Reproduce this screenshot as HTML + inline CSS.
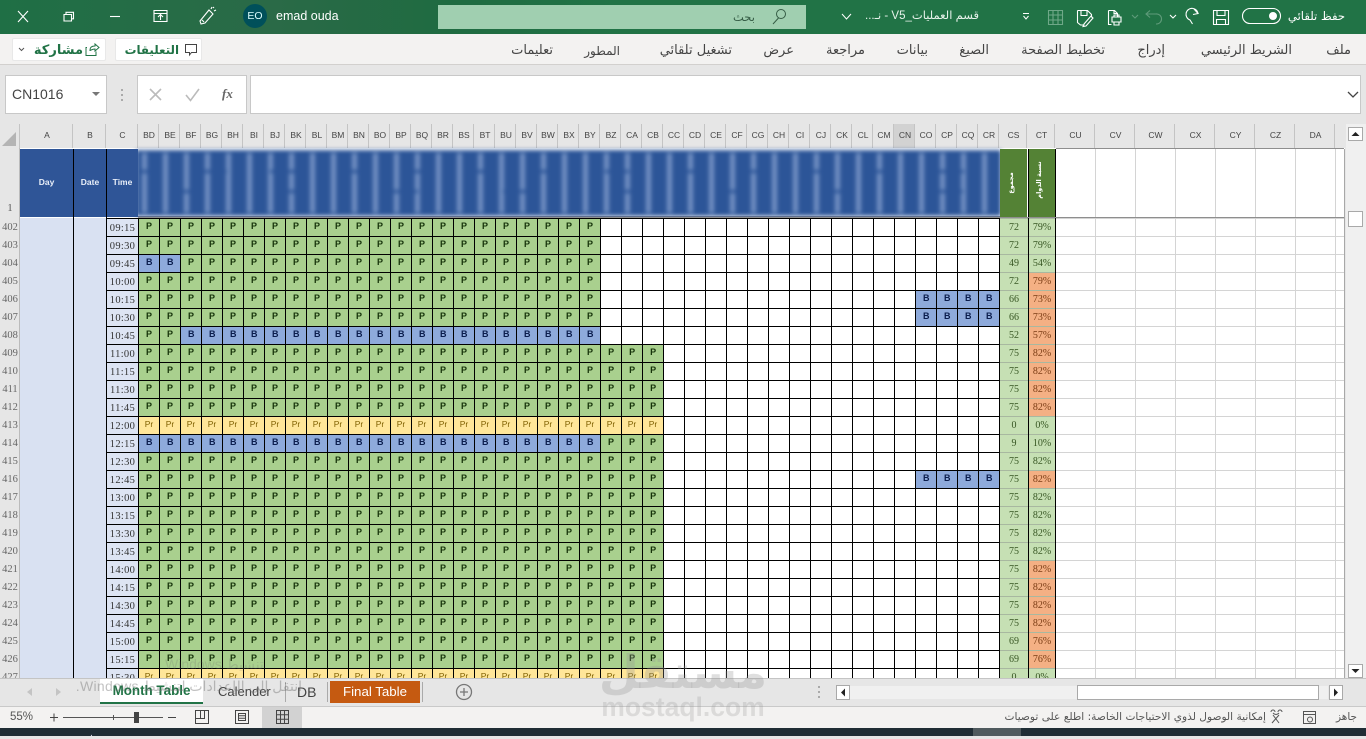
<!DOCTYPE html>
<html lang="ar"><head><meta charset="utf-8"><title>Excel</title>
<style>
*{box-sizing:border-box}
html,body{margin:0;padding:0;width:1366px;height:736px;overflow:hidden;background:#e6e6e6;font-family:"Liberation Sans","DejaVu Sans",sans-serif}
.a{position:absolute;white-space:nowrap}
svg{position:absolute;overflow:visible}
#title{left:0;top:0;width:1366px;height:34px;background:linear-gradient(90deg,#1f6f45,#2a6a47 20%,#1f6b41 33%,#217346 45%,#217346)}
#ribbon{left:0;top:34px;width:1366px;height:31px;background:#f3f2f1;border-bottom:1px solid #d2d0ce}
.tab{top:43px;font:13px "DejaVu Sans",sans-serif;color:#444;direction:rtl}
.btn{background:#fff;border:1px solid #e8e8e8;border-radius:2px}
#fb{left:0;top:65px;width:1366px;height:59px;background:#e6e6e6}
.box{background:#fff;border:1px solid #c8c8c8}
#sheet{left:20px;top:148px;width:1325px;height:530px;background:#fff}
#ch{left:0;top:124px;width:1346px;height:24px;background:#e6e6e6;display:flex;font-size:8.5px;color:#444}
#ch span{display:block;text-align:center;line-height:23px;border-right:1px solid #c4c4c4;height:24px;padding-left:2px}
#ch .n{width:21px}#ch .m{width:40px}
#ro{left:0;top:148px;width:20px;height:530px;background:#e6e6e6;border-right:1px solid #bbb}
#nums{left:0;top:219px;width:20px;height:459px;overflow:hidden;font:10.5px/18px "Liberation Serif",serif;color:#666;text-align:center}
.lb{background:#d9e1f2;top:218px;height:460px}
.hd{background:#2f5597;color:#e8eef8;font:bold 8.5px/66px "Liberation Sans",sans-serif;text-align:center;top:149px;height:68px}
#times{left:107px;top:218px;width:31px;height:460px;overflow:hidden;font:10.5px/18px "Liberation Serif",serif;color:#333;text-align:center;letter-spacing:.3px}
#times div{height:18px;line-height:19px;border-top:1px solid #000;background:#dde4f3}
#grid{left:138px;top:218px;width:861px;height:460px;overflow:hidden;background:#fff}
.r{display:flex;height:18px}
.r p{margin:0;height:18px;font:bold 9px/16px "Liberation Sans",sans-serif;letter-spacing:15px;padding-left:8px;overflow:hidden;white-space:nowrap;flex:none}
.g{background:#a9d08e;color:#16330a}
.r p.u{background:#8eaadb;color:#0b1d4d;letter-spacing:14.5px;padding-left:8px}
.y{background:#ffe699;color:#7f6000;width:21px;height:18px;font:8.5px/16px "Liberation Sans",sans-serif;text-align:center;flex:none;padding-left:1px}
#lines{left:138px;top:218px;width:862px;height:460px;background-image:linear-gradient(90deg,#000 1px,transparent 1px),linear-gradient(#000 1px,transparent 1px);background-size:21px 18px}
#cs,#ct{top:218px;height:460px;overflow:hidden;font:10px/18px "Liberation Serif",serif;color:#375623;text-align:center}
#cs{left:1000px;width:28px}#ct{left:1028px;width:28px;border-left:1px solid #000;border-right:1px solid #000}
#cs div,#ct div{height:18px;background:#c6e0b4;border-top:1px solid #a8b8a0;line-height:18px}
#ct .o{background:#f4b084;color:#7a3c14}
#gl{left:1056px;top:149px;width:288px;height:529px;background-image:linear-gradient(90deg,transparent 39px,#d4d4d4 39px);background-size:40px 100%}
#gh{left:1056px;top:218px;width:288px;height:460px;background-image:linear-gradient(#d4d4d4 1px,transparent 1px);background-size:100% 18px}
#blur{left:136px;top:150px;width:865px;height:66px;background:#2c5598;overflow:visible;filter:blur(2.2px)}
#blur div{position:absolute;left:6px;top:3px;width:858px;height:60px;background:repeating-linear-gradient(90deg,#7592c4 0 5px,transparent 5px 21px)}
#blur em{position:absolute;left:0;width:865px;height:3px}
.gt{background:#548235;top:149px;height:68px;color:#fff}
.gt span{position:absolute;font:bold 6.5px "DejaVu Sans",sans-serif;transform:rotate(-90deg);white-space:nowrap;direction:rtl}
#tabs{left:0;top:678px;width:1366px;height:29px;background:#e6e6e6;border-bottom:1px solid #c9c9c9;border-top:1px solid #c4c4c4}
#status{left:0;top:707px;width:1366px;height:21px;background:#f3f2f1}
#task{left:0;top:728px;width:1366px;height:8px;background:#1f2d35}
.sb{background:#fff;border:1px solid #a9a9a9}
</style></head><body>

<div id="title" class="a"></div>
<svg style="left:0;top:0" width="440" height="34" fill="none" stroke="#fff" stroke-width="1.1">
<path d="M18 11 L28 22 M28 11 L18 22"/>
<path d="M64 14.500h7.500v6.500h-7.500z M66 14.500v-2.200h7.500v6.500h-2"/>
<path d="M110 16.500h10"/>
<path d="M154 10.500h13v11h-13z M154 13.500h13 M160.500 20v-5 M158 17l2.500-2.500 2.500 2.500"/>
<path d="M200 21l9-11 4 4-8 9-4 1z M202 20l2 2 M211 9l1-2 M214 11l2-1 M213 8l1-1"/>
</svg>
<div class="a" style="left:243px;top:4px;width:24px;height:24px;border-radius:50%;background:#00505a;color:#dff;font:10.5px/24px 'Liberation Sans',sans-serif;text-align:center">EO</div>
<div class="a" style="left:276px;top:8px;color:#fff;font:12.5px/17px 'Liberation Sans',sans-serif">emad ouda</div>
<div class="a" style="left:438px;top:5px;width:368px;height:24px;background:#a0cfb0"></div>
<svg style="left:770px;top:8px" width="18" height="18" fill="none" stroke="#355c45" stroke-width="1"><circle cx="11" cy="6" r="4.500"/><path d="M8.500 10 L3 16"/></svg>
<div class="a" style="left:733px;top:9px;color:#355c45;font:11.5px/16px 'DejaVu Sans',sans-serif;direction:rtl">بحث</div>
<div class="a" style="left:857px;top:8px;width:122px;color:#e6f2ea;font:11.5px/17px 'Liberation Sans','DejaVu Sans',sans-serif;direction:rtl;text-align:right">قسم العمليات_V5 - نـ...</div>
<svg style="left:840px;top:12px" width="14" height="10" fill="none" stroke="#fff"><path d="M2 2l4.500 5 4.500-5"/></svg>
<svg style="left:1020px;top:0" width="346" height="34" fill="none" stroke="#fff" stroke-width="1.1">
<path d="M3 13.500h6 M3.500 16l2.500 3 2.500-3" stroke-width="1"/>
<g stroke="#6fa888"><path d="M28.500 10.500h14v14h-14z M28.500 15h14 M28.500 20h14 M33 10.500v14 M38 10.500v14"/></g>
<path d="M57.500 10.500h10l4 4v3 M57.500 10.500v12l3 2.500h4 M61 10.500v5h6v-5 M64 24l7-8 2 2-7 8-3 .5z"/>
<path d="M88.500 10.500h6l3 3v3 M88.500 10.500v14h3 M94 10.500v3h3 M92 17h9v5h-9z M94 17v-2h5v2 M94 22v3h5v-3"/>
<path d="M112 15l3 3 3-3" stroke="#5f9b7a"/>
<path d="M128 14h9a5 5 0 0 1 1 10h-1 M131 10.500l-4 3.500 4 3.500" stroke="#5f9b7a" transform="translate(-1 0)"/>
<path d="M150 15l3 3 3-3"/>
<path d="M178 14a6 6 0 1 0-8 6l2.500 4 M174 9l4 4.500-5 1"/>
<path d="M193.500 10.500h15v14h-15z M197 10.500v5h8v-5 M196.500 24.500v-5h9v5"/>
<rect x="222.500" y="8.500" width="38" height="15" rx="7.500"/>
</svg>
<div class="a" style="left:1269px;top:12px;width:8px;height:8px;border-radius:50%;background:#fff"></div>
<div class="a" style="left:1285px;top:8px;width:60px;color:#fff;font:11.6px/16px 'DejaVu Sans',sans-serif;direction:rtl;text-align:right">حفظ تلقائي</div>

<div id="ribbon" class="a"></div>
<div class="a tab" style="right:15px">ملف</div>
<div class="a tab" style="right:74px">الشريط الرئيسي</div>
<div class="a tab" style="right:201px">إدراج</div>
<div class="a tab" style="right:261px">تخطيط الصفحة</div>
<div class="a tab" style="right:377px">الصيغ</div>
<div class="a tab" style="right:438px">بيانات</div>
<div class="a tab" style="right:501px">مراجعة</div>
<div class="a tab" style="right:572px">عرض</div>
<div class="a tab" style="right:634px">تشغيل تلقائي</div>
<div class="a tab" style="right:746px;font-size:12px;top:44px">المطور</div>
<div class="a tab" style="right:813px">تعليمات</div>
<div class="a btn" style="left:12px;top:38px;width:94px;height:23px"></div>
<div class="a btn" style="left:115px;top:38px;width:87px;height:23px"></div>
<svg style="left:12px;top:38px" width="192" height="23" fill="none" stroke="#217346" stroke-width="1">
<path d="M7 10l2.500 2.500 2.500-2.500" stroke="#555"/>
<path d="M75 9.500h-1v8h10v-4 M78 13v-1c0-3 2-4 5-4V6l4 3.500-4 3.500v-2c-2 0-3 .5-5 1.500z"/>
<path d="M173.500 6.500h11v8h-5l-2 2.500v-2.500h-4z" stroke="#444"/>
</svg>
<div class="a" style="left:30px;top:42px;width:53px;color:#217346;font:bold 13px/17px 'DejaVu Sans',sans-serif;direction:rtl;text-align:right">مشاركة</div>
<div class="a" style="left:122px;top:42px;width:57px;color:#217346;font:bold 11.8px/17px 'DejaVu Sans',sans-serif;direction:rtl;text-align:right">التعليقات</div>

<div id="fb" class="a"></div>
<div class="a box" style="left:5px;top:75px;width:102px;height:39px"></div>
<div class="a" style="left:12px;top:86px;font:14px/17px 'Liberation Sans',sans-serif;color:#444">CN1016</div>
<svg style="left:88px;top:90px" width="16" height="10"><path d="M4 2h8l-4 4z" fill="#777"/></svg>
<svg style="left:118px;top:88px" width="8" height="18" fill="#aaa"><rect x="3" y="1" width="2" height="2"/><rect x="3" y="6" width="2" height="2"/><rect x="3" y="11" width="2" height="2"/></svg>
<div class="a box" style="left:137px;top:75px;width:110px;height:39px"></div>
<svg style="left:137px;top:75px" width="110" height="39" fill="none" stroke="#bbb" stroke-width="1.600"><path d="M13 14l11 11 M24 14L13 25"/><path d="M49 20l4.500 5.500L62 14" /></svg>
<div class="a" style="left:222px;top:85px;font:italic bold 13px/18px 'Liberation Serif',serif;color:#666">fx</div>
<div class="a box" style="left:250px;top:75px;width:1111px;height:39px"></div>
<svg style="left:1346px;top:90px" width="14" height="10" fill="none" stroke="#444" stroke-width="1.300"><path d="M2 2l5 5 5-5"/></svg>

<div id="sheet" class="a"></div>
<div id="ch" class="a">
<span style="width:20px;background:#e6e6e6"></span><span style="width:53px">A</span><span style="width:33px">B</span><span style="width:32px">C</span>
<span class="n">BD</span><span class="n">BE</span><span class="n">BF</span><span class="n">BG</span><span class="n">BH</span><span class="n">BI</span><span class="n">BJ</span><span class="n">BK</span><span class="n">BL</span><span class="n">BM</span><span class="n">BN</span><span class="n">BO</span><span class="n">BP</span><span class="n">BQ</span><span class="n">BR</span><span class="n">BS</span><span class="n">BT</span><span class="n">BU</span><span class="n">BV</span><span class="n">BW</span><span class="n">BX</span><span class="n">BY</span><span class="n">BZ</span><span class="n">CA</span><span class="n">CB</span><span class="n">CC</span><span class="n">CD</span><span class="n">CE</span><span class="n">CF</span><span class="n">CG</span><span class="n">CH</span><span class="n">CI</span><span class="n">CJ</span><span class="n">CK</span><span class="n">CL</span><span class="n">CM</span><span class="n" style="background:#d2d2d2">CN</span><span class="n">CO</span><span class="n">CP</span><span class="n">CQ</span><span class="n">CR</span>
<span style="width:28px">CS</span><span style="width:28px">CT</span>
<span class="m">CU</span><span class="m">CV</span><span class="m">CW</span><span class="m">CX</span><span class="m">CY</span><span class="m">CZ</span><span class="m">DA</span>
</div>
<svg style="left:0;top:124px" width="20" height="24"><path d="M2 22 L16 8 V22z" fill="#b4b4b4"/></svg>
<div id="ro" class="a"></div>
<div class="a" style="left:0;top:202px;width:20px;text-align:center;font:10.5px/14px 'Liberation Serif',serif;color:#555">1</div>
<div id="nums" class="a">402<br>403<br>404<br>405<br>406<br>407<br>408<br>409<br>410<br>411<br>412<br>413<br>414<br>415<br>416<br>417<br>418<br>419<br>420<br>421<br>422<br>423<br>424<br>425<br>426<br>427</div>

<div id="gl" class="a"></div>
<div id="gh" class="a"></div>
<div class="a" style="left:1344px;top:149px;width:1px;height:529px;background:#a8a8a8"></div>

<div id="blur" class="a"><div></div><em style="top:20px;background:repeating-linear-gradient(90deg,#2c5598 0 24px,transparent 24px 67px)"></em><em style="top:40px;background:repeating-linear-gradient(90deg,transparent 0 40px,#2c5598 40px 64px,transparent 64px 109px)"></em></div>
<div class="a" style="left:138px;top:216px;width:862px;height:2px;background:#5f6f8f"></div>

<div class="a lb" style="left:20px;width:53px"></div>
<div class="a lb" style="left:74px;width:32px"></div>
<div class="a" style="left:73px;top:149px;width:1px;height:529px;background:#000"></div>
<div class="a" style="left:106px;top:149px;width:1px;height:529px;background:#000"></div>
<div class="a hd" style="left:20px;width:53px">Day</div>
<div class="a hd" style="left:74px;width:32px">Date</div>
<div class="a hd" style="left:107px;width:31px">Time</div>
<div id="times" class="a"><div>09:15</div><div>09:30</div><div>09:45</div><div>10:00</div><div>10:15</div><div>10:30</div><div>10:45</div><div>11:00</div><div>11:15</div><div>11:30</div><div>11:45</div><div>12:00</div><div>12:15</div><div>12:30</div><div>12:45</div><div>13:00</div><div>13:15</div><div>13:30</div><div>13:45</div><div>14:00</div><div>14:15</div><div>14:30</div><div>14:45</div><div>15:00</div><div>15:15</div><div>15:30</div></div>

<div id="grid" class="a">
<div class="r"><p class="g" style="width:462px">PPPPPPPPPPPPPPPPPPPPPP</p></div>
<div class="r"><p class="g" style="width:462px">PPPPPPPPPPPPPPPPPPPPPP</p></div>
<div class="r"><p class="u" style="width:42px">BB</p><p class="g" style="width:420px">PPPPPPPPPPPPPPPPPPPP</p></div>
<div class="r"><p class="g" style="width:462px">PPPPPPPPPPPPPPPPPPPPPP</p></div>
<div class="r"><p class="g" style="width:462px">PPPPPPPPPPPPPPPPPPPPPP</p><p class="u" style="width:84px;margin-left:315px">BBBB</p></div>
<div class="r"><p class="g" style="width:462px">PPPPPPPPPPPPPPPPPPPPPP</p><p class="u" style="width:84px;margin-left:315px">BBBB</p></div>
<div class="r"><p class="g" style="width:42px">PP</p><p class="u" style="width:420px">BBBBBBBBBBBBBBBBBBBB</p></div>
<div class="r"><p class="g" style="width:525px">PPPPPPPPPPPPPPPPPPPPPPPPP</p></div>
<div class="r"><p class="g" style="width:525px">PPPPPPPPPPPPPPPPPPPPPPPPP</p></div>
<div class="r"><p class="g" style="width:525px">PPPPPPPPPPPPPPPPPPPPPPPPP</p></div>
<div class="r"><p class="g" style="width:525px">PPPPPPPPPPPPPPPPPPPPPPPPP</p></div>
<div class="r"><div class="y">Pr</div><div class="y">Pr</div><div class="y">Pr</div><div class="y">Pr</div><div class="y">Pr</div><div class="y">Pr</div><div class="y">Pr</div><div class="y">Pr</div><div class="y">Pr</div><div class="y">Pr</div><div class="y">Pr</div><div class="y">Pr</div><div class="y">Pr</div><div class="y">Pr</div><div class="y">Pr</div><div class="y">Pr</div><div class="y">Pr</div><div class="y">Pr</div><div class="y">Pr</div><div class="y">Pr</div><div class="y">Pr</div><div class="y">Pr</div><div class="y">Pr</div><div class="y">Pr</div><div class="y">Pr</div></div>
<div class="r"><p class="u" style="width:462px">BBBBBBBBBBBBBBBBBBBBBB</p><p class="g" style="width:63px">PPP</p></div>
<div class="r"><p class="g" style="width:525px">PPPPPPPPPPPPPPPPPPPPPPPPP</p></div>
<div class="r"><p class="g" style="width:525px">PPPPPPPPPPPPPPPPPPPPPPPPP</p><p class="u" style="width:84px;margin-left:252px">BBBB</p></div>
<div class="r"><p class="g" style="width:525px">PPPPPPPPPPPPPPPPPPPPPPPPP</p></div>
<div class="r"><p class="g" style="width:525px">PPPPPPPPPPPPPPPPPPPPPPPPP</p></div>
<div class="r"><p class="g" style="width:525px">PPPPPPPPPPPPPPPPPPPPPPPPP</p></div>
<div class="r"><p class="g" style="width:525px">PPPPPPPPPPPPPPPPPPPPPPPPP</p></div>
<div class="r"><p class="g" style="width:525px">PPPPPPPPPPPPPPPPPPPPPPPPP</p></div>
<div class="r"><p class="g" style="width:525px">PPPPPPPPPPPPPPPPPPPPPPPPP</p></div>
<div class="r"><p class="g" style="width:525px">PPPPPPPPPPPPPPPPPPPPPPPPP</p></div>
<div class="r"><p class="g" style="width:525px">PPPPPPPPPPPPPPPPPPPPPPPPP</p></div>
<div class="r"><p class="g" style="width:525px">PPPPPPPPPPPPPPPPPPPPPPPPP</p></div>
<div class="r"><p class="g" style="width:525px">PPPPPPPPPPPPPPPPPPPPPPPPP</p></div>
<div class="r"><div class="y">Pr</div><div class="y">Pr</div><div class="y">Pr</div><div class="y">Pr</div><div class="y">Pr</div><div class="y">Pr</div><div class="y">Pr</div><div class="y">Pr</div><div class="y">Pr</div><div class="y">Pr</div><div class="y">Pr</div><div class="y">Pr</div><div class="y">Pr</div><div class="y">Pr</div><div class="y">Pr</div><div class="y">Pr</div><div class="y">Pr</div><div class="y">Pr</div><div class="y">Pr</div><div class="y">Pr</div><div class="y">Pr</div><div class="y">Pr</div><div class="y">Pr</div><div class="y">Pr</div><div class="y">Pr</div></div>
</div>
<div id="lines" class="a"></div>

<div class="a gt" style="left:1000px;width:27px"><span style="left:-5px;top:30px;width:32px;text-align:center">مجموع</span></div>
<div class="a gt" style="left:1028px;width:28px;border-left:1px solid #000;border-right:1px solid #000"><span style="left:-14px;top:27px;width:48px;text-align:center">نسبة الدوام</span></div>
<div id="cs" class="a"><div>72</div><div>72</div><div>49</div><div>72</div><div>66</div><div>66</div><div>52</div><div>75</div><div>75</div><div>75</div><div>75</div><div>0</div><div>9</div><div>75</div><div>75</div><div>75</div><div>75</div><div>75</div><div>75</div><div>75</div><div>75</div><div>75</div><div>75</div><div>69</div><div>69</div><div>0</div></div>
<div id="ct" class="a"><div>79%</div><div>79%</div><div>54%</div><div class="o">79%</div><div class="o">73%</div><div class="o">73%</div><div class="o">57%</div><div class="o">82%</div><div class="o">82%</div><div class="o">82%</div><div class="o">82%</div><div>0%</div><div>10%</div><div>82%</div><div class="o">82%</div><div>82%</div><div>82%</div><div>82%</div><div>82%</div><div class="o">82%</div><div class="o">82%</div><div class="o">82%</div><div class="o">82%</div><div class="o">76%</div><div class="o">76%</div><div>0%</div></div>
<div class="a" style="left:138px;top:217px;width:1206px;height:1px;background:#8e8e8e"></div>
<div class="a" style="left:1056px;top:148px;width:288px;height:1px;background:#8e8e8e"></div>

<div class="a" style="left:1346px;top:124px;width:20px;height:554px;background:#f0f0f0"></div>
<div class="a sb" style="left:1348px;top:127px;width:15px;height:14px"></div>
<svg style="left:1348px;top:127px" width="15" height="14"><path d="M3.500 9h8l-4-4z" fill="#222"/></svg>
<div class="a sb" style="left:1348px;top:211px;width:15px;height:16px"></div>
<div class="a sb" style="left:1348px;top:664px;width:15px;height:14px"></div>
<svg style="left:1348px;top:664px" width="15" height="14"><path d="M3.500 5h8l-4 4z" fill="#222"/></svg>

<div id="tabs" class="a"></div>
<svg style="left:20px;top:684px" width="50" height="16" fill="#c4c4c4"><path d="M12 4v8l-5-4z"/><path d="M36 4v8l5-4z"/></svg>
<div class="a" style="left:100px;top:679px;width:103px;height:25px;background:#fff;border-bottom:2px solid #217346;text-align:center;color:#217346;font:bold 13.4px/24px 'Liberation Sans',sans-serif">Month Table</div>
<div class="a" style="left:218px;top:684px;color:#444;font:13px/16px 'Liberation Sans',sans-serif">Calender</div>
<div class="a" style="left:285px;top:682px;width:1px;height:20px;background:#aaa"></div>
<div class="a" style="left:297px;top:684px;color:#444;font:14px/16px 'Liberation Sans',sans-serif">DB</div>
<div class="a" style="left:327px;top:682px;width:1px;height:20px;background:#aaa"></div>
<div class="a" style="left:330px;top:681px;width:90px;height:22px;background:#c55a11;color:#fff;text-align:center;font:13.3px/21px 'Liberation Sans',sans-serif">Final Table</div>
<div class="a" style="left:422px;top:682px;width:1px;height:20px;background:#aaa"></div>
<svg style="left:455px;top:683px" width="18" height="18" fill="none" stroke="#777" stroke-width="1.300"><circle cx="9" cy="9" r="7.500"/><path d="M5 9h8 M9 5v8"/></svg>
<svg style="left:815px;top:685px" width="8" height="16" fill="#aaa"><rect x="3" y="1" width="2" height="2"/><rect x="3" y="6" width="2" height="2"/><rect x="3" y="11" width="2" height="2"/></svg>
<div class="a" style="left:850px;top:686px;width:478px;height:13px;background:#f0f0f0"></div>
<div class="a sb" style="left:836px;top:685px;width:14px;height:15px"></div>
<svg style="left:836px;top:685px" width="14" height="15"><path d="M9 3.500v8l-4-4z" fill="#222"/></svg>
<div class="a sb" style="left:1077px;top:685px;width:242px;height:15px"></div>
<div class="a sb" style="left:1329px;top:685px;width:14px;height:15px"></div>
<svg style="left:1329px;top:685px" width="14" height="15"><path d="M5 3.500v8l4-4z" fill="#222"/></svg>

<div id="status" class="a"></div>
<div class="a" style="left:10px;top:709px;color:#555;font:11.5px/16px 'Liberation Sans',sans-serif">55%</div>
<div class="a" style="left:262px;top:707px;width:40px;height:21px;background:#d2d2d2"></div>
<svg style="left:0;top:707px" width="320" height="21" fill="none" stroke="#444">
<path d="M50 10.500h8 M54 6.500v8"/>
<path d="M63 10.500h100" stroke="#555"/><path d="M113.500 8v5" stroke="#555"/>
<rect x="134" y="5" width="5" height="11" fill="#444" stroke="none"/>
<path d="M168 10.500h8"/>
<path d="M195.500 3.500h13v13h-13z M195.500 11.500h9v-8 M200.500 3.500v8" />
<path d="M235.500 3.500h13v13h-13z M238.500 6.500h7v7h-7z M238.500 8.800h7 M238.500 11.200h7" />
<path d="M276.500 3.500h12v13h-12z M276.500 7.800h12 M276.500 12.200h12 M280.500 3.500v13 M284.500 3.500v13"/>
</svg>
<div class="a" style="left:1003px;top:710px;width:263px;color:#555;font:10.6px/15px 'DejaVu Sans',sans-serif;direction:rtl;text-align:right;overflow:hidden">إمكانية الوصول لذوي الاحتياجات الخاصة: اطلع على توصيات</div>
<svg style="left:1265px;top:707px" width="56" height="21" fill="none" stroke="#555"><path d="M8 8l6 8 M14 8l-7 8 M6 5a2 2 0 0 1 4 0 M13 5a2 2 0 0 1 4 0 M8 6c2 2 4 2 6 0"/><path d="M38.500 4.500h12v12h-12z M38.500 7.500h12"/><circle cx="45" cy="12.500" r="2.500"/></svg>
<div class="a" style="left:1336px;top:710px;color:#555;font:10.5px/15px 'DejaVu Sans',sans-serif;direction:rtl">جاهز</div>
<div id="task" class="a"></div>
<div class="a" style="left:973px;top:728px;width:48px;height:8px;background:#4f5a5e"></div>
<div class="a" style="left:90px;top:733px;width:14px;height:3px;color:#dde;font:9px/3px 'DejaVu Sans',sans-serif">.</div>

<div class="a" style="left:165px;top:655px;color:rgba(110,110,110,.22);font:14px/18px 'Liberation Sans','DejaVu Sans',sans-serif">Windows تنشيط</div>
<div class="a" style="right:1064px;top:677px;direction:rtl;letter-spacing:.3px;color:rgba(110,110,110,.42);font:14px/18px 'Liberation Sans','DejaVu Sans',sans-serif">انتقل إلى الإعدادات لتنشيط Windows.</div>
<div class="a" style="left:596px;top:645px;width:174px;text-align:center;color:rgba(150,150,150,.3);font:bold 46px/54px 'DejaVu Sans',sans-serif">مستقل</div>
<div class="a" style="left:596px;top:692px;width:174px;text-align:center;color:rgba(150,150,150,.26);font:bold 26.5px/30px 'Liberation Sans',sans-serif">mostaql.com</div>
</body></html>
